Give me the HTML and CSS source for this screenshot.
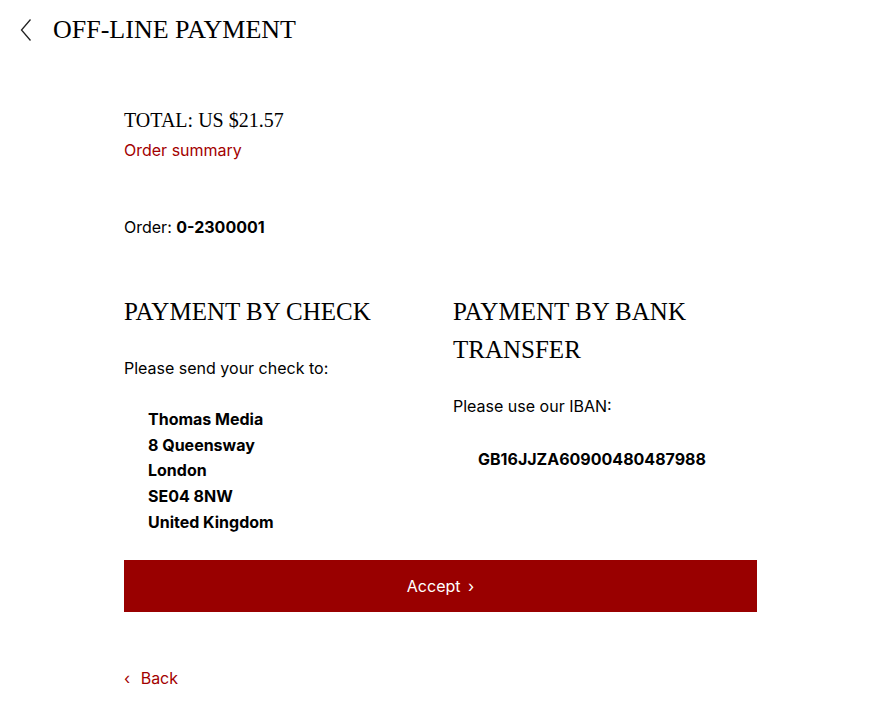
FILE: index.html
```html
<!DOCTYPE html>
<html>
<head>
<meta charset="utf-8">
<link rel="stylesheet" href="styles.css">
</head>
<body>
<header class="topbar">
  <a class="back-icon" href="#" aria-label="Back">
    <svg width="12" height="24" viewBox="0 0 12 24"><path d="M10.5 1.5 L1.5 12 L10.5 22.5" fill="none" stroke="#222" stroke-width="1.3"/></svg>
  </a>
  <h1 class="page-title">OFF-LINE PAYMENT</h1>
</header>
<main class="content">
  <section class="total-block">
    <h2 class="total">TOTAL: US $21.57</h2>
    <a class="link" href="#">Order summary</a>
  </section>
  <p class="order">Order: <strong>0-2300001</strong></p>
  <div class="methods">
    <section class="method">
      <h3 class="method-title">PAYMENT BY CHECK</h3>
      <p class="method-text">Please send your check to:</p>
      <address class="addr">
        <strong>Thomas Media</strong>
        <strong>8 Queensway</strong>
        <strong>London</strong>
        <strong>SE04 8NW</strong>
        <strong>United Kingdom</strong>
      </address>
    </section>
    <section class="method">
      <h3 class="method-title">PAYMENT BY BANK TRANSFER</h3>
      <p class="method-text">Please use our IBAN:</p>
      <p class="iban"><strong>GB16JJZA60900480487988</strong></p>
    </section>
  </div>
  <button class="accept">Accept <span class="chev">›</span></button>
  <a class="backlink" href="#"><span class="chev-l">‹</span> Back</a>
</main>
</body>
</html>
```
FILE: styles.css
```css
html, body { margin: 0; padding: 0; background: #fff; }
body {
  font-family: "Inter", "Noto Sans", sans-serif;
  font-size: 16px;
  color: #000;
}
.topbar {
  display: flex;
  align-items: center;
  height: 60px;
  padding-left: 20px;
}
.back-icon { display: flex; width: 12px; height: 24px; margin-right: 21px; }
.page-title {
  margin: 0;
  font-family: "Liberation Serif", "DejaVu Serif", serif;
  font-weight: 400;
  font-size: 26px;
  color: #000;
}
.content {
  width: 633px;
  margin-left: 124px;
}
.total-block { margin-top: 46px; }
.total {
  margin: 0;
  font-family: "Liberation Serif", "DejaVu Serif", serif;
  font-weight: 400;
  font-size: 20px;
  line-height: 28px;
}
.link {
  display: block;
  color: #a30000;
  text-decoration: none;
  line-height: 24px;
  margin-top: 4px;
}
.order { margin: 53px 0 0; line-height: 24px; }
.order strong { font-weight: 700; }
.methods {
  display: grid;
  grid-template-columns: 329px 1fr;
  margin-top: 54px;
}
.method-title {
  margin: 0;
  font-family: "Liberation Serif", "DejaVu Serif", serif;
  font-weight: 400;
  font-size: 25px;
  line-height: 38px;
  color: #000;
}
.method-text { margin: 25px 0 0; line-height: 24px; }
.addr {
  font-style: normal;
  display: flex;
  flex-direction: column;
  margin: 27px 0 0 24px;
  line-height: 25.7px;
}
.iban { margin: 29px 0 0 25px; line-height: 24px; }
.accept {
  display: block;
  width: 633px;
  height: 52px;
  margin-top: 24px;
  border: 0;
  background: #990000;
  color: #fff;
  font-family: inherit;
  font-size: 16px;
  cursor: pointer;
}
.chev { margin-left: 3px; }
.backlink {
  display: inline-block;
  margin-top: 54px;
  color: #a30000;
  text-decoration: none;
  line-height: 24px;
}
.chev-l { margin-right: 6px; }
```
